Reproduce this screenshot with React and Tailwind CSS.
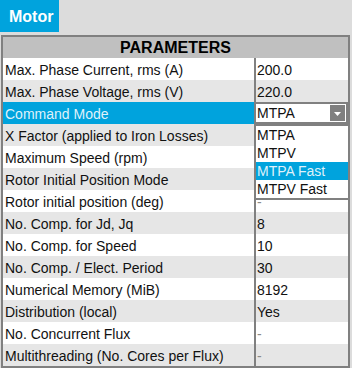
import React from "react";

const rows = [
  ["Max. Phase Current, rms (A)", "200.0"],
  ["Max. Phase Voltage, rms (V)", "220.0"],
  ["Command Mode", "__select"],
  ["X Factor (applied to Iron Losses)", ""],
  ["Maximum Speed (rpm)", ""],
  ["Rotor Initial Position Mode", ""],
  ["Rotor initial position (deg)", "-"],
  ["No. Comp. for Jd, Jq", "8"],
  ["No. Comp. for Speed", "10"],
  ["No. Comp. / Elect. Period", "30"],
  ["Numerical Memory (MiB)", "8192"],
  ["Distribution (local)", "Yes"],
  ["No. Concurrent Flux", "-"],
  ["Multithreading (No. Cores per Flux)", "-"],
];

const options = ["MTPA", "MTPV", "MTPA Fast", "MTPV Fast"];

function Select() {
  return (
    <div className="relative h-[22px] w-full">
      <div className="flex h-[22px] w-full items-center border-y-2 border-r-2 border-[#808080] bg-white">
        <span className="flex-1 pl-[1px] text-[14px] leading-[18px] text-[#111]">MTPA</span>
        <div className="mr-[1px] flex h-[16px] w-[15px] items-center justify-center bg-[#808080]">
          <svg width="7" height="4" viewBox="0 0 7 4" className="mt-[2px]">
            <polygon points="0,0 7,0 3.5,4" fill="#ffffff" />
          </svg>
        </div>
      </div>
      <div className="absolute left-[-2px] top-[22px] z-10 w-[96px] border-2 border-[#808080] bg-white">
        {options.map((o) => (
          <div
            key={o}
            className={
              o === "MTPA Fast"
                ? "h-[18px] bg-[#00a3dd] pl-[1px] text-[14px] leading-[18px] text-[#dff1fa]"
                : "h-[18px] bg-white pl-[1px] text-[14px] leading-[18px] text-[#111]"
            }
          >
            {o}
          </div>
        ))}
      </div>
    </div>
  );
}

export default function App() {
  return (
    <div className="h-[368px] w-[352px] overflow-hidden bg-[#dcdcdc] font-['Liberation_Sans',Arial,sans-serif]">
      <div className="flex h-[32px] w-[59px] items-center bg-[#00a3dd] pl-[9px] pt-[2px] text-[16px] font-bold text-white">
        Motor
      </div>
      <div className="ml-[1px] mt-[3px] w-[349px] border-2 border-[#808080]">
        <div className="flex h-[21px] items-center justify-center bg-[#c0c0c0] text-[16px] font-bold leading-[21px] text-black">
          PARAMETERS
        </div>
        {rows.map(([label, value], i) => {
          const isSel = value === "__select";
          const bg = isSel ? "bg-[#00a3dd]" : i % 2 === 0 ? "bg-white" : "bg-[#e6e6e6]";
          const valBg = isSel ? "bg-white" : i % 2 === 0 ? "bg-white" : "bg-[#e6e6e6]";
          return (
            <div key={label} className="flex h-[22px]">
              <div
                className={`h-[22px] w-[251px] overflow-hidden whitespace-nowrap pl-[2px] pt-[2px] text-[14px] leading-[20px] ${bg} ${
                  isSel ? "text-[#dff1fa]" : "text-[#111]"
                }`}
              >
                {label}
              </div>
              <div className="h-[22px] w-[2px] bg-[#808080]" />
              <div className={`relative h-[22px] flex-1 ${valBg}`}>
                {isSel ? (
                  <Select />
                ) : (
                  <div
                    className={`h-[22px] whitespace-nowrap pl-[1px] pt-[2px] text-[14px] leading-[20px] ${
                      value === "-" ? "text-[#8a8a8a]" : "text-[#111]"
                    }`}
                  >
                    {value}
                  </div>
                )}
              </div>
            </div>
          );
        })}
      </div>
    </div>
  );
}
